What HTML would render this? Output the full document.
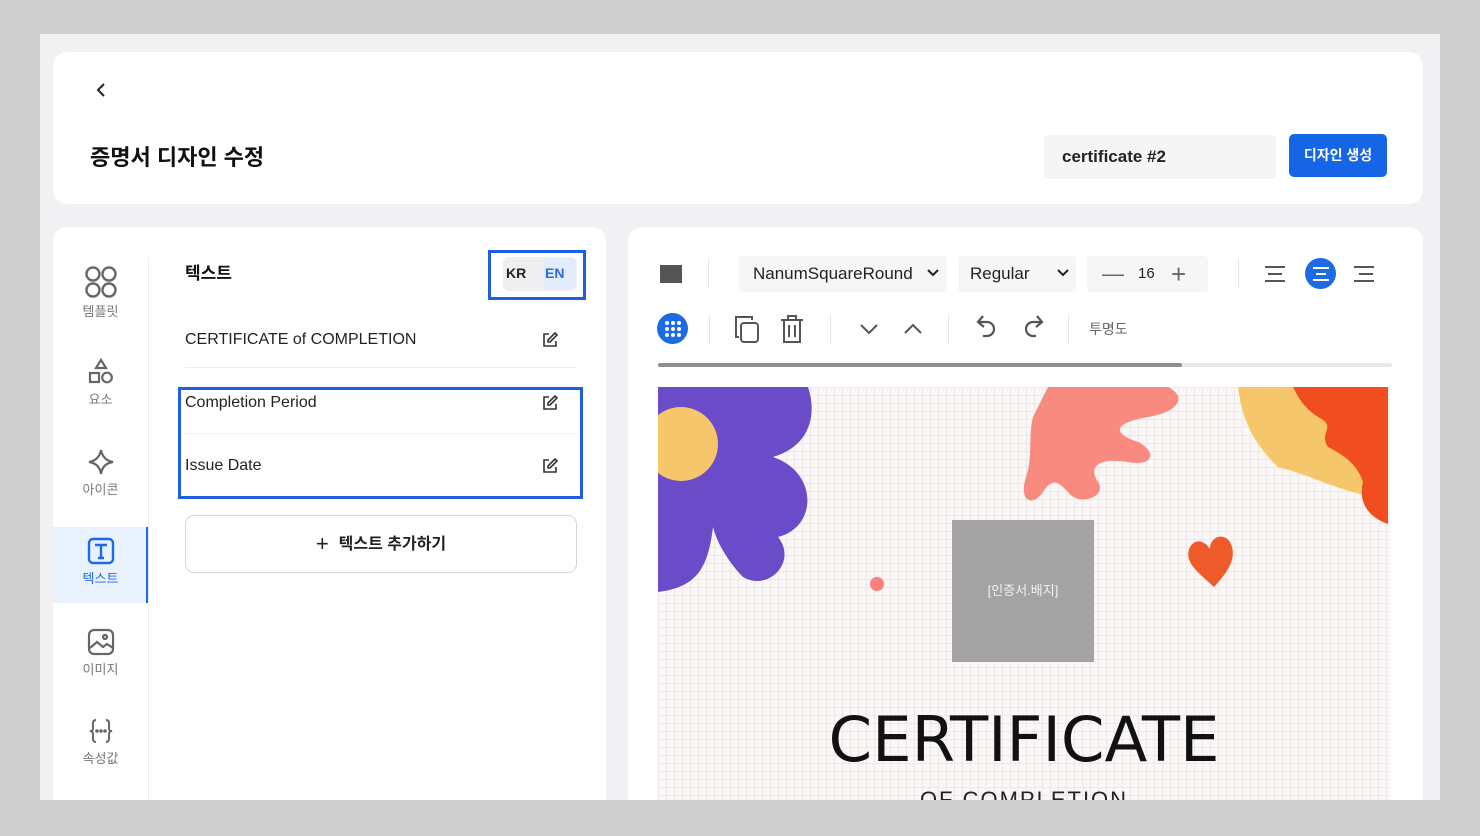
<!DOCTYPE html>
<html><head><meta charset="utf-8"><style>
*{margin:0;padding:0;box-sizing:border-box}
body{width:1480px;height:836px;background:#cfcfcf;font-family:"Liberation Sans","Noto Sans CJK KR",sans-serif;position:relative;overflow:hidden;color:#222}
.frame{position:absolute;left:40px;top:34px;width:1400px;height:766px;background:#f1f1f3;overflow:hidden}
.card{position:absolute;background:#fff;border-radius:14px}
.abs{position:absolute}
.nav{position:absolute;left:0;width:95px;text-align:center;font-size:13px;color:#777}
.nav svg{display:block;margin:0 auto 2px}
.row{position:absolute;left:132px;font-size:16px;color:#222}
.ed{position:absolute;left:488px}
.sep{position:absolute;width:1px;height:30px;background:#e5e5e5}
.box{position:absolute;background:#f6f6f7;border-radius:4px;height:36px;font-size:17px;color:#222;line-height:36px}
</style></head><body>
<div class="frame">
 <div class="card" style="left:13px;top:18px;width:1370px;height:152px">
  <svg class="abs" style="left:42px;top:30px" width="14" height="16" viewBox="0 0 14 16"><path d="M9 2L3 8l6 6" fill="none" stroke="#222" stroke-width="2"/></svg>
  <div class="abs" style="left:37px;top:88px;font-size:22px;font-weight:bold;color:#111">증명서 디자인 수정</div>
  <div class="abs" style="left:991px;top:83px;width:232px;height:44px;background:#f5f5f6;border-radius:6px;font-size:17px;font-weight:bold;line-height:44px;padding-left:18px;color:#222">certificate #2</div>
  <div class="abs" style="left:1236px;top:82px;width:98px;height:43px;background:#1565e6;border-radius:5px;color:#fff;font-size:14px;font-weight:bold;text-align:center;line-height:43px">디자인 생성</div>
 </div>
 <div class="card" style="left:13px;top:193px;width:553px;height:600px">
  <div class="abs" style="left:95px;top:30px;width:1px;height:580px;background:#eee"></div>
  <div class="nav" style="top:38px"><svg width="34" height="34" viewBox="0 0 34 34" fill="none" stroke="#666" stroke-width="2.4"><circle cx="9" cy="9" r="6.5"/><circle cx="25" cy="9" r="6.5"/><circle cx="9" cy="25" r="6.5"/><circle cx="25" cy="25" r="6.5"/></svg>템플릿</div>
  <div class="nav" style="top:130px"><svg width="30" height="30" viewBox="0 0 30 30" fill="none" stroke="#666" stroke-width="2.2"><path d="M15 3l5 8H10z"/><rect x="4" y="16" width="9" height="9"/><circle cx="21" cy="20.5" r="4.8"/></svg>요소</div>
  <div class="nav" style="top:220px"><svg width="30" height="30" viewBox="0 0 30 30" fill="none" stroke="#666" stroke-width="2.2"><path d="M15 3c1 6 5 11 12 12-7 1-11 5-12 12-1-7-5-11-12-12 7-1 11-6 12-12z"/></svg>아이콘</div>
  <div class="abs" style="left:0;top:300px;width:95px;height:76px;background:#e9f1fd;border-right:2px solid #1d6ae5"></div>
  <div class="nav" style="top:309px;color:#1d6ae5"><svg width="30" height="30" viewBox="0 0 30 30" fill="none" stroke="#1d6ae5" stroke-width="2.4"><rect x="3" y="3" width="24" height="24" rx="4"/><path d="M9 9h12M15 9v13M12 22h6"/></svg>텍스트</div>
  <div class="nav" style="top:400px"><svg width="30" height="30" viewBox="0 0 30 30" fill="none" stroke="#666" stroke-width="2.2"><rect x="3" y="3" width="24" height="24" rx="5"/><circle cx="19" cy="10" r="2"/><path d="M4 21l7-6 6 5 4-3 6 4"/></svg>이미지</div>
  <div class="nav" style="top:489px"><svg width="30" height="30" viewBox="0 0 30 30" fill="none" stroke="#666" stroke-width="2"><path d="M10 4c-4 0-3 4-3 8s-3 3-3 3 3 0 3 3-1 8 3 8M20 4c4 0 3 4 3 8s3 3 3 3-3 0-3 3 1 8-3 8"/><circle cx="11" cy="15" r=".8" fill="#666"/><circle cx="15" cy="15" r=".8" fill="#666"/><circle cx="19" cy="15" r=".8" fill="#666"/></svg>속성값</div>
  <div class="abs" style="left:132px;top:32px;font-size:17px;font-weight:bold;color:#111">텍스트</div>
  <div class="abs" style="left:435px;top:23px;width:98px;height:50px;border:3px solid #1d5fe0"></div>
  <div class="abs" style="left:450px;top:30px;width:74px;height:34px;background:#efeff1;border-radius:6px"></div>
  <div class="abs" style="left:491px;top:31px;width:32px;height:31px;background:#e3ecfb;border-radius:5px"></div>
  <div class="abs" style="left:453px;top:38px;font-size:14px;font-weight:bold;color:#222">KR</div>
  <div class="abs" style="left:492px;top:38px;font-size:14px;font-weight:bold;color:#2a6ae3">EN</div>
  <div class="row" style="top:104px">CERTIFICATE of COMPLETION</div>
  <div class="abs" style="left:132px;top:140px;width:392px;height:1px;background:#eee"></div>
  <div class="abs" style="left:125px;top:160px;width:405px;height:112px;border:3px solid #1d5fe0"></div>
  <div class="row" style="top:167px">Completion Period</div>
  <div class="abs" style="left:132px;top:206px;width:392px;height:1px;background:#f0f0f0"></div>
  <div class="row" style="top:230px">Issue Date</div>
  <svg class="ed" style="top:104px" width="18" height="18" viewBox="0 0 18 18" fill="none" stroke="#333" stroke-width="1.6"><path d="M8 3H3v12h12v-5"/><path d="M14 2l2 2-7 7H7V9z"/></svg>
  <svg class="ed" style="top:167px" width="18" height="18" viewBox="0 0 18 18" fill="none" stroke="#333" stroke-width="1.6"><path d="M8 3H3v12h12v-5"/><path d="M14 2l2 2-7 7H7V9z"/></svg>
  <svg class="ed" style="top:230px" width="18" height="18" viewBox="0 0 18 18" fill="none" stroke="#333" stroke-width="1.6"><path d="M8 3H3v12h12v-5"/><path d="M14 2l2 2-7 7H7V9z"/></svg>
  <div class="abs" style="left:132px;top:288px;width:392px;height:58px;border:1px solid #d6d6d8;border-radius:9px;text-align:center;line-height:56px;font-size:16px;font-weight:bold;color:#222"><span style="font-size:22px;font-weight:normal;vertical-align:-2px;margin-right:10px">+</span>텍스트 추가하기</div>
 </div>
 <div class="card" style="left:588px;top:193px;width:795px;height:600px;overflow:hidden">
  <div class="abs" style="left:32px;top:38px;width:22px;height:18px;background:#555"></div>
  <div class="sep" style="left:80px;top:32px"></div>
  <div class="box" style="left:111px;top:29px;width:208px;padding-left:14px">NanumSquareRound</div>
  <div class="box" style="left:330px;top:29px;width:118px;padding-left:12px">Regular</div>
  <svg class="abs" style="left:428px;top:41px" width="14" height="10"><path d="M2 2l5 5 5-5" fill="none" stroke="#222" stroke-width="2"/></svg>
  <svg class="abs" style="left:298px;top:41px" width="14" height="10"><path d="M2 2l5 5 5-5" fill="none" stroke="#222" stroke-width="2"/></svg>
  <div class="box" style="left:459px;top:29px;width:121px;font-size:15px"><span style="position:absolute;left:15px;font-size:22px;color:#666">—</span><span style="position:absolute;left:51px">16</span><span style="position:absolute;left:84px;font-size:26px;color:#666;font-weight:300">+</span></div>
  <div class="sep" style="left:610px;top:32px"></div>
  <svg class="abs" style="left:636px;top:37px" width="22" height="20" stroke="#555" stroke-width="2"><path d="M1 3h20M4 10h14M1 17h20"/></svg>
  <div class="abs" style="left:677px;top:31px;width:31px;height:31px;border-radius:50%;background:#1d6ae5"></div>
  <svg class="abs" style="left:683px;top:37px" width="20" height="20" stroke="#fff" stroke-width="2"><path d="M2 4h16M5 10h10M2 16h16"/></svg>
  <svg class="abs" style="left:725px;top:37px" width="22" height="20" stroke="#555" stroke-width="2"><path d="M1 3h20M6 10h14M1 17h20"/></svg>
  <div class="abs" style="left:29px;top:86px;width:31px;height:31px;border-radius:50%;background:#1d6ae5"></div>
  <svg class="abs" style="left:35px;top:92px" width="20" height="20" fill="#fff"><circle cx="4" cy="4" r="2"/><circle cx="10" cy="4" r="2"/><circle cx="16" cy="4" r="2"/><circle cx="4" cy="10" r="2"/><circle cx="10" cy="10" r="2"/><circle cx="16" cy="10" r="2"/><circle cx="4" cy="16" r="2"/><circle cx="10" cy="16" r="2"/><circle cx="16" cy="16" r="2"/></svg>
  <div class="sep" style="left:81px;top:88px"></div>
  <svg class="abs" style="left:104px;top:86px" width="32" height="34" fill="none" stroke="#555" stroke-width="2"><path d="M7 24H4V4h16v3"/><rect x="9" y="10" width="17" height="19" rx="3"/></svg>
  <svg class="abs" style="left:150px;top:86px" width="28" height="34" fill="none" stroke="#555" stroke-width="2"><path d="M3 7h22M10 7V3h8v4M6 7v22h16V7M11 12v12M17 12v12"/></svg>
  <div class="sep" style="left:202px;top:88px"></div>
  <svg class="abs" style="left:232px;top:96px" width="18" height="12" fill="none" stroke="#555" stroke-width="2"><path d="M1 2l8 8 8-8"/></svg>
  <svg class="abs" style="left:276px;top:96px" width="18" height="12" fill="none" stroke="#555" stroke-width="2"><path d="M1 10l8-8 8 8"/></svg>
  <div class="sep" style="left:320px;top:88px"></div>
  <svg class="abs" style="left:346px;top:86px" width="28" height="32" fill="none" stroke="#555" stroke-width="2.2"><path d="M9 3L4 9l6 5"/><path d="M4 9h9a7 7 0 010 14H9"/></svg>
  <svg class="abs" style="left:390px;top:86px" width="28" height="32" fill="none" stroke="#555" stroke-width="2.2"><path d="M19 3l5 6-6 5"/><path d="M24 9h-9a7 7 0 000 14h3"/></svg>
  <div class="sep" style="left:440px;top:88px"></div>
  <div class="abs" style="left:461px;top:92px;font-size:14px;color:#666">투명도</div>
  <div class="abs" style="left:30px;top:136px;width:734px;height:4px;background:#e8e8e8;border-radius:2px"></div>
  <div class="abs" style="left:30px;top:136px;width:524px;height:4px;background:#8e8e8e;border-radius:2px"></div>
  <div class="abs" style="left:30px;top:160px;width:732px;height:460px;background-color:#faf7f6;background-image:linear-gradient(#ece8e8 1px,transparent 1px),linear-gradient(90deg,#ece8e8 1px,transparent 1px);background-size:8px 8px;overflow:hidden">
   <svg class="abs" style="left:0;top:0" width="732" height="460">
    <path d="M0 0H150C160 30 150 60 115 70C160 85 160 140 120 150C140 175 110 205 85 190C75 180 60 160 55 140C50 180 40 200 0 205Z" fill="#6a4bc8"/>
    <circle cx="23" cy="57" r="37" fill="#f5c66a"/>
    <path d="M390 0H510C530 10 520 25 490 30C460 35 450 45 480 55C500 65 495 80 470 75C440 70 430 80 440 95C450 110 420 120 410 105C400 95 395 90 385 105C375 120 360 115 368 90C375 70 370 50 375 30Z" fill="#f88a80"/>
    <path d="M580 0H730V110C690 110 660 90 620 80C600 60 585 40 580 0Z" fill="#f5c66a"/>
    <path d="M635 0H730V137C710 130 700 115 705 95C700 80 690 70 670 60C660 45 680 40 660 30C645 20 640 10 635 0Z" fill="#f04d20"/>
    <path d="M556 200C540 185 525 175 532 160C538 150 548 155 552 162C552 150 565 145 572 155C580 170 570 185 556 200Z" fill="#ee5a2a"/>
    <circle cx="219" cy="197" r="7" fill="#f8807a"/>
   </svg>
   <div class="abs" style="left:294px;top:133px;width:142px;height:142px;background:#a3a3a3;color:#f0f0f0;font-size:13px;text-align:center;line-height:142px">[인증서.배지]</div>
   <div class="abs" style="left:0;top:316px;width:732px;text-align:center;font-size:62px;color:#111;font-family:'DejaVu Sans Condensed','DejaVu Sans',sans-serif;font-weight:normal;transform:scaleX(1.12)">CERTIFICATE</div>
   <div class="abs" style="left:0;top:400px;width:732px;text-align:center;font-size:22px;color:#222;letter-spacing:2px">OF COMPLETION</div>
  </div>
 </div>
</div>
</body></html>
